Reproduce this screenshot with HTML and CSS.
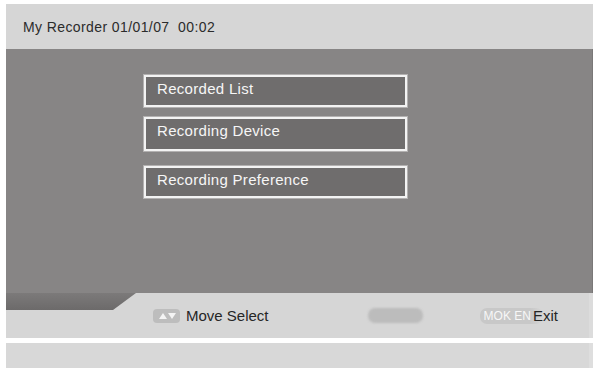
FILE: index.html
```html
<!doctype html>
<html lang="en">
<head>
  <meta charset="utf-8">
  <title>My Recorder</title>
  <link rel="stylesheet" href="styles.css">
</head>
<body>
<div class="screen">
  <div class="header">My Recorder 01/01/07&nbsp; 00:02</div>

  <div class="main">
    <ul class="menu">
      <li class="item">Recorded List</li>
      <li class="item second">Recording Device</li>
      <li class="item third">Recording Preference</li>
    </ul>
  </div>

  <div class="bar">
    <div class="tab"></div>
    <span class="arrows">
      <svg width="27" height="14" viewBox="0 0 27 14">
        <path d="M6 10 L10 4 L14 10 Z" fill="#f4f4f4"/>
        <path d="M15 4 L23 4 L19 10 Z" fill="#f4f4f4"/>
      </svg>
    </span>
    <span class="label">Move Select</span>
    <span class="blank"></span>
    <span class="okpill">MOK EN</span><span class="label exit">Exit</span>
  </div>

  <div class="strip"></div>
</div>
</body>
</html>
```

FILE: styles.css
```css
body {
  margin: 0;
  background: #fff;
  font-family: "Liberation Sans", Arial, sans-serif;
}
.screen {
  margin: 4px 2px 0 6px;
  display: flex;
  flex-direction: column;
}
.header {
  height: 45px;
  background: #d6d6d6;
  color: #2b2b2b;
  font-size: 14px;
  letter-spacing: 0.4px;
  padding-left: 17px;
  display: flex;
  align-items: center;
}
.main {
  height: 244px;
  background: #878585;
  border-right: 1px solid #7a7878;
}
.menu {
  list-style: none;
  margin: 0;
  padding: 26px 0 0 138px;
}
.item {
  box-sizing: border-box;
  width: 263px;
  height: 32px;
  padding: 4px 0 0 11px;
  background: #6f6d6d;
  border: 2px solid #f3f3f3;
  box-shadow: 0 0 0 1px #b3b1b1;
  color: #f6f6f6;
  font-size: 15px;
  letter-spacing: 0.3px;
  line-height: 16px;
}
.second {
  margin-top: 10px;
  height: 34px;
}
.third {
  margin-top: 15px;
}
.bar {
  position: relative;
  height: 45px;
  background: #d6d6d6;
  border-right: 4px solid #dcdcdc;
  display: flex;
  align-items: center;
  padding-left: 147px;
  color: #262626;
  font-size: 15px;
}
.tab {
  position: absolute;
  left: 0;
  top: 0;
  width: 130px;
  height: 17px;
  background: linear-gradient(#7c7a7a, #6c6a6a);
  clip-path: polygon(0 0, 130px 0, 107px 17px, 0 17px);
}
.arrows {
  display: flex;
  width: 27px;
  height: 14px;
  background: #bdbdbd;
  border-radius: 4px;
  filter: blur(0.4px);
  margin-top: 1px;
}
.label {
  margin-left: 6px;
}
.blank {
  width: 55px;
  height: 15px;
  margin-left: 99px;
  background: #bcbcbc;
  border-radius: 7px;
  filter: blur(1px);
}
.okpill {
  margin-left: 57px;
  padding: 1px 12px 1px 4px;
  background: linear-gradient(90deg, #c8c8c8 80%, #d6d6d6);
  border-radius: 7px;
  color: #f7f7f7;
  font-size: 12px;
}
.exit {
  margin-left: -10px;
}
.strip {
  margin-top: 5px;
  height: 25px;
  background: #d8d8d8;
  border-right: 4px solid #dedede;
}
```
